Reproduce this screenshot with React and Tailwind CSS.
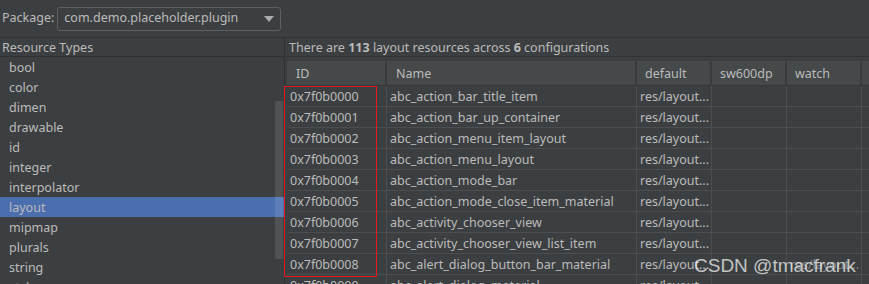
import React from "react";

const types = ["bool","color","dimen","drawable","id","integer","interpolator","layout","mipmap","plurals","string","style","xml"];
const rows = [
  ["0x7f0b0000","abc_action_bar_title_item","res/layout...",""],
  ["0x7f0b0001","abc_action_bar_up_container","res/layout...",""],
  ["0x7f0b0002","abc_action_menu_item_layout","res/layout...",""],
  ["0x7f0b0003","abc_action_menu_layout","res/layout...",""],
  ["0x7f0b0004","abc_action_mode_bar","res/layout...",""],
  ["0x7f0b0005","abc_action_mode_close_item_material","res/layout...",""],
  ["0x7f0b0006","abc_activity_chooser_view","res/layout...",""],
  ["0x7f0b0007","abc_activity_chooser_view_list_item","res/layout...",""],
  ["0x7f0b0008","abc_alert_dialog_button_bar_material","res/layout...","res/layout..."],
  ["0x7f0b0009","abc_alert_dialog_material","res/layout...",""],
];

export default function App() {
  return (
    <div className="relative w-[869px] h-[284px] overflow-hidden bg-[#3c3f41] text-[#bbbbbb] text-[12.5px] leading-none" style={{fontFamily: '"Noto Sans", "Segoe UI", sans-serif'}}>
      {/* top bar */}
      <div className="h-[38px] flex items-center pl-[2px] gap-[3px] border-b border-[#323232]">
        <span>Package:</span>
        <div className="w-[224px] h-[24px] flex items-center justify-between border border-[#5e6060] rounded-[3px] pl-[6px] pr-[6px]">
          <span>com.demo.placeholder.plugin</span>
          <svg width="10" height="6" viewBox="0 0 10 6"><path d="M0 0 L10 0 L5 6 Z" fill="#a9abad"/></svg>
        </div>
      </div>
      <div className="flex h-[246px]">
        {/* left */}
        <div className="w-[285px] border-r border-[#2f3133] flex flex-col shrink-0">
          <div className="h-[19px] flex items-center pl-[2px] pt-[3px] border-b border-[#2f3133] shrink-0">Resource Types</div>
          <div className="relative flex-1 overflow-hidden">
            {types.map((t) => (
              <div key={t} className={"h-[20px] flex items-center pl-[9px] pt-[2px] " + (t === "layout" ? "bg-[#4b6eaf]" : "")}>{t}</div>
            ))}
            <div className="absolute left-[275px] top-[44px] w-[8px] h-[158px] bg-white/[0.1]" />
          </div>
        </div>
        {/* right */}
        <div className="flex-1 flex flex-col pl-[1px] overflow-hidden">
          <div className="h-[19px] flex items-center pl-[3px] pt-[2px] border-b border-[#2f3133] shrink-0">
            <span>There are <b className="font-bold">113</b> layout resources across <b className="font-bold">6</b> configurations</span>
          </div>
          <div className="mt-[4px] pl-[1px]">
            <div className="flex h-[25px] bg-[#45494a] border-b border-[#353739]">
              <div className="w-[100px] flex items-center pl-[9px] pt-[3px] border-r-2 border-[#393b3d]">ID</div>
              <div className="w-[250px] flex items-center pl-[9px] pt-[3px] border-r-2 border-[#393b3d]">Name</div>
              <div className="w-[75px] flex items-center pl-[8px] pt-[3px] border-r-2 border-[#393b3d]">default</div>
              <div className="w-[75px] flex items-center pl-[8px] pt-[3px] border-r-2 border-[#393b3d]">sw600dp</div>
              <div className="w-[75px] flex items-center pl-[8px] pt-[3px] border-r-2 border-[#393b3d]">watch</div>
              <div className="flex-1" />
            </div>
            {rows.map((r) => (
              <div key={r[0]} className="flex h-[21px] border-b border-[#4b4e50]">
                <div className="w-[100px] flex items-center pl-[3px] pt-[2px] border-r border-[#4b4e50]">{r[0]}</div>
                <div className="w-[250px] flex items-center pl-[3px] pt-[2px] border-r border-[#4b4e50] whitespace-nowrap overflow-hidden">{r[1]}</div>
                <div className="w-[75px] flex items-center pl-[3px] pt-[2px] border-r border-[#4b4e50]">{r[2]}</div>
                <div className="w-[75px] flex items-center pl-[3px] pt-[2px] border-r border-[#4b4e50]"></div>
                <div className="w-[75px] flex items-center pl-[3px] pt-[2px] border-r border-[#4b4e50] text-[#bbbbbb]/60">{r[3]}</div>
                <div className="flex-1" />
              </div>
            ))}
          </div>
        </div>
      </div>
      {/* red highlight */}
      <div className="absolute left-[284px] top-[86px] w-[93px] h-[191px] border border-[#e5191c]" />
      {/* watermark */}
      <div className="absolute left-[694px] top-[256px] text-[19px] leading-none text-white/70" style={{fontFamily: '"Liberation Sans", Arial, sans-serif'}}>CSDN @tmacfrank</div>
    </div>
  );
}
